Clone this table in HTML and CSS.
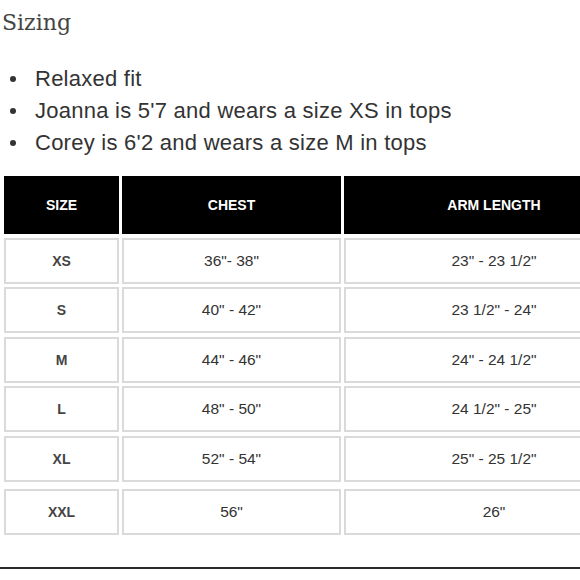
FILE: index.html
```html
<!DOCTYPE html>
<html lang="en">
<head>
<meta charset="utf-8">
<title>Sizing</title>
<link rel="stylesheet" href="styles.css">
</head>
<body>
<div class="page">
  <h2 class="title">Sizing</h2>
  <ul class="notes">
    <li>Relaxed fit</li>
    <li>Joanna is 5'7 and wears a size XS in tops</li>
    <li>Corey is 6'2 and wears a size M in tops</li>
  </ul>
  <div class="chart">
    <div class="head">SIZE</div>
    <div class="head">CHEST</div>
    <div class="head">ARM LENGTH</div>

    <div class="cell size">XS</div>
    <div class="cell">36"- 38"</div>
    <div class="cell">23" - 23 1/2"</div>

    <div class="cell size">S</div>
    <div class="cell">40" - 42"</div>
    <div class="cell">23 1/2" - 24"</div>

    <div class="cell size">M</div>
    <div class="cell">44" - 46"</div>
    <div class="cell">24" - 24 1/2"</div>

    <div class="cell size">L</div>
    <div class="cell">48" - 50"</div>
    <div class="cell">24 1/2" - 25"</div>

    <div class="cell size">XL</div>
    <div class="cell">52" - 54"</div>
    <div class="cell">25" - 25 1/2"</div>

    <div class="cell size last">XXL</div>
    <div class="cell last">56"</div>
    <div class="cell last">26"</div>
  </div>
  <hr class="rule">
</div>
</body>
</html>
```

FILE: styles.css
```css
html, body {
  margin: 0;
  padding: 0;
  overflow: hidden;
  background: #ffffff;
}

.page {
  width: 580px;
  height: 580px;
  overflow: hidden;
  font-family: "Liberation Sans", Arial, sans-serif;
  color: #333333;
}

.title {
  margin: 8px 0 0 2px;
  font-family: "DejaVu Serif", serif;
  font-weight: normal;
  font-size: 22px;
  line-height: 30px;
  color: #444444;
}

.notes {
  list-style: none;
  margin: 25px 0 0 0;
  padding: 0;
}

.notes li {
  display: flex;
  align-items: center;
  font-size: 22px;
  letter-spacing: 0.25px;
  line-height: 32px;
  color: #333333;
}

.notes li::before {
  content: "";
  width: 6px;
  height: 6px;
  border-radius: 50%;
  background: #333333;
  margin: 0 19px 0 10px;
  flex: none;
}

.chart {
  display: grid;
  grid-template-columns: 115px 219px 300px;
  grid-template-rows: 58px repeat(5, 46px) 0 46px;
  column-gap: 3px;
  row-gap: 3.5px;
  margin: 17px 0 0 4px;
  width: max-content;
}

.head {
  background: #000000;
  color: #ffffff;
  font-weight: bold;
  font-size: 14px;
  display: flex;
  align-items: center;
  justify-content: center;
}

.cell {
  border: 2px solid #dadada;
  background: #ffffff;
  font-size: 15.5px;
  color: #333333;
  display: flex;
  align-items: center;
  justify-content: center;
}

.cell.size {
  font-weight: bold;
  font-size: 14px;
  color: #444444;
}

.cell.last {
  grid-row: 8;
}

.rule {
  margin: 32px 0 0 0;
  border: 0;
  height: 2px;
  background: #2a2a2a;
}
```
